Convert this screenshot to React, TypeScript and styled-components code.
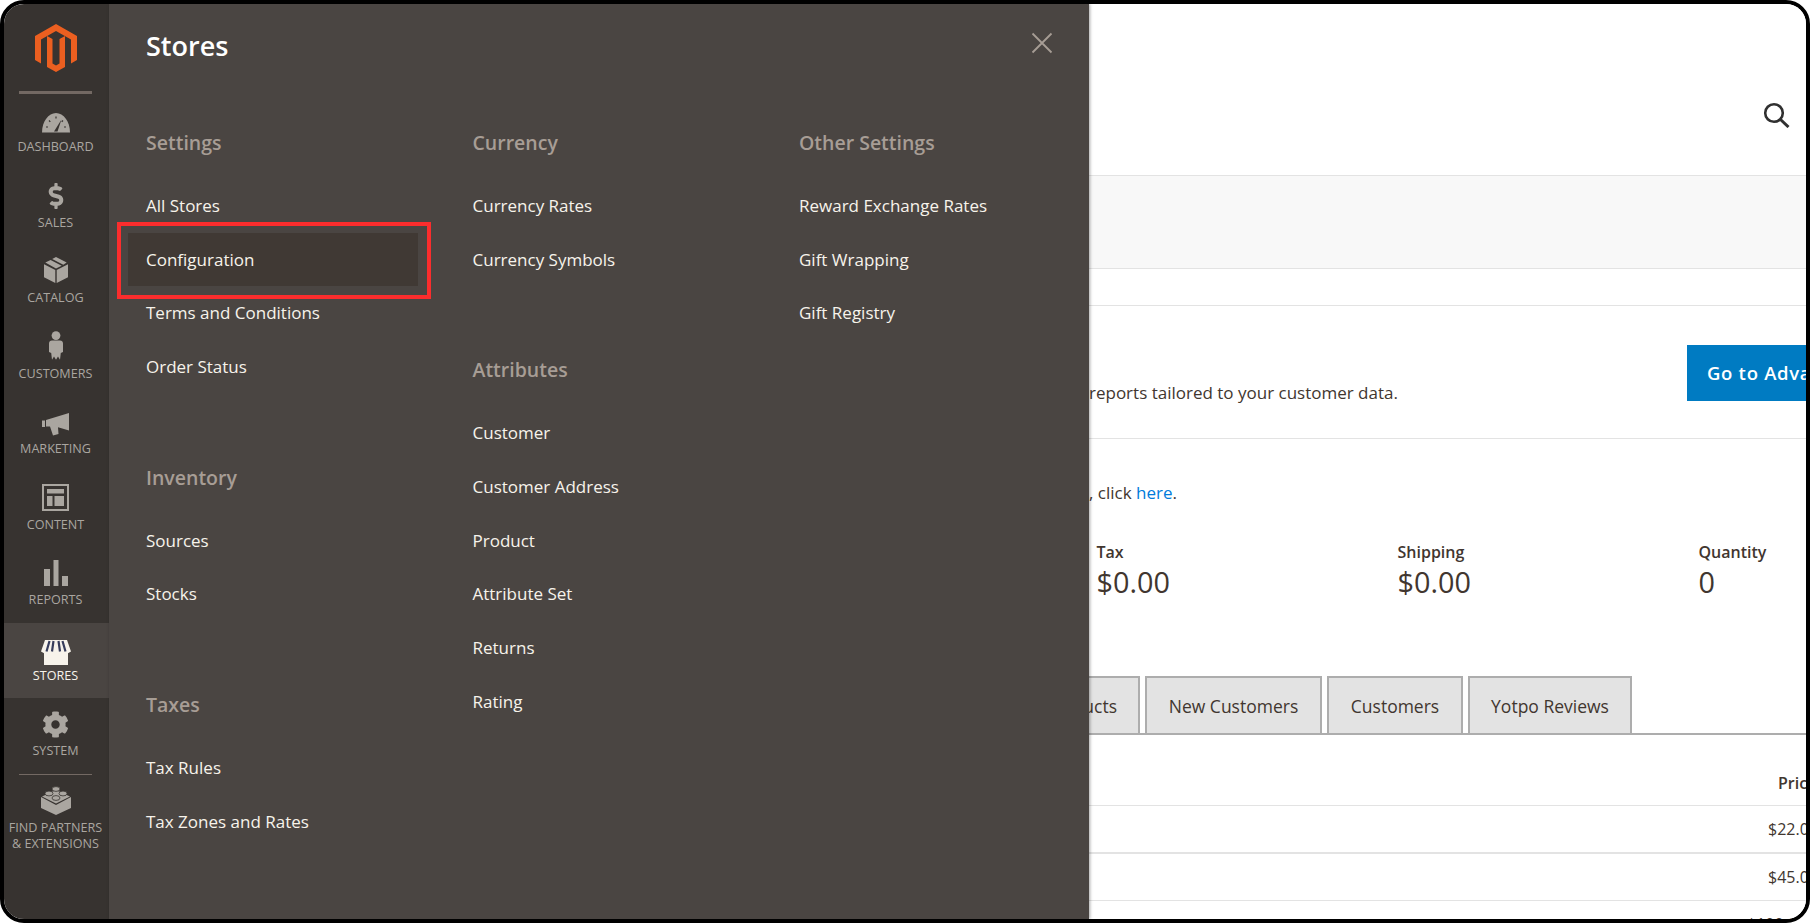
import * as React from 'react';
import styled, { createGlobalStyle } from 'styled-components';
import { FaCog, FaDollarSign } from 'react-icons/fa';

const GlobalStyle = createGlobalStyle`
  html, body {
    margin: 0;
    background: #fff;
  }
  * {
    box-sizing: border-box;
  }
`;

const Frame = styled.div`
  display: flex;
  width: 1810px;
  height: 923px;
  border: 4px solid #000;
  border-radius: 24px;
  overflow: hidden;
  font-family: 'Open Sans', sans-serif;
  color: #41362f;
`;

/* left rail */
const Sidebar = styled.nav`
  flex: 0 0 105px;
  display: flex;
  flex-direction: column;
  align-items: stretch;
  background: #373330;
`;

const LogoBlock = styled.div`
  height: 87px;
  padding: 20px 1px 0 0;
  display: flex;
  justify-content: center;
`;

const RailRule = styled.div<{ $thick?: boolean }>`
  flex: none;
  height: ${({ $thick }) => ($thick ? '3px' : '1px')};
  margin: 0 17px 0 15px;
  background: #736963;
`;

const RailItem = styled.a<{ $active?: boolean }>`
  flex: none;
  height: 75.5px;
  padding: 12px 2px 0 0;
  display: flex;
  flex-direction: column;
  align-items: center;
  background: ${({ $active }) => ($active ? '#4a4542' : 'transparent')};
  color: ${({ $active }) => ($active ? '#f7f3eb' : '#aaa6a0')};
`;

const RailIcon = styled.span<{ $nudge?: number }>`
  height: 28px;
  display: flex;
  align-items: center;
  justify-content: center;
  transform: translateY(${({ $nudge }) => $nudge ?? 0}px);
`;

const RailLabel = styled.span`
  margin-top: 5px;
  font-size: 12.6px;
  line-height: 16px;
  text-align: center;
  text-transform: uppercase;
  white-space: nowrap;
`;

/* Stores flyout */
const Panel = styled.section`
  flex: 0 0 980px;
  min-width: 0;
  position: relative;
  z-index: 2;
  padding: 24px 0 0 37px;
  background: #4a4542;
  box-shadow: 1px 0 3px rgba(0, 0, 0, 0.35);
`;

const PanelTitle = styled.h1`
  margin: 0 0 59px;
  font-size: 27px;
  font-weight: 600;
  line-height: 36px;
  color: #fff;
`;

const CloseButton = styled.button`
  position: absolute;
  top: 27px;
  right: 35px;
  width: 24px;
  height: 24px;
  padding: 0;
  border: 0;
  background: none;
  color: #a79d95;
`;

const Columns = styled.div`
  display: grid;
  grid-template-columns: 326.5px 326.5px 1fr;
`;

const Group = styled.div`
  margin-bottom: 64px;
`;

const GroupTitle = styled.h2`
  margin: 0 0 16px;
  font-size: 19.5px;
  font-weight: 600;
  line-height: 40px;
  color: #a79d95;
`;

const MenuLink = styled.a<{ $active?: boolean }>`
  position: relative;
  display: block;
  width: 290px;
  height: 53.67px;
  margin-left: -18px;
  padding-left: 18px;
  font-size: 17px;
  line-height: 53.67px;
  white-space: nowrap;
  color: #f7f3eb;
  background: ${({ $active }) => ($active ? '#403934' : 'transparent')};
`;

const Callout = styled.span`
  position: absolute;
  top: -11px;
  right: -13px;
  bottom: -13px;
  left: -11px;
  border: 4px solid #fb2d2d;
`;

/* dashboard behind the flyout */
const Main = styled.main`
  flex: 1 1 0;
  min-width: 0;
  overflow: hidden;
  background: #fff;
`;

const TopBar = styled.header`
  height: 171px;
  padding: 98px 16px 0 0;
  display: flex;
  justify-content: flex-end;
  color: #303030;
`;

const NoticeBand = styled.div`
  height: 94px;
  background: #f8f8f8;
  border-top: 1px solid #e3e3e3;
  border-bottom: 1px solid #e3e3e3;
`;

const Spacer = styled.div`
  height: 37px;
  border-bottom: 1px solid #e3e3e3;
`;

const ReportsRow = styled.div`
  height: 133px;
  display: flex;
  border-bottom: 1px solid #e3e3e3;
  white-space: nowrap;
`;

const ReportsText = styled.p`
  flex: 0 0 598px;
  margin: 75px 0 0;
  font-size: 17px;
  line-height: 24px;
`;

const AdvancedButton = styled.a`
  flex: none;
  height: 56px;
  margin-top: 39px;
  padding: 0 20px;
  font-size: 18.5px;
  font-weight: 600;
  letter-spacing: 0.7px;
  line-height: 56px;
  color: #fff;
  background: #007bc2;
`;

const Hint = styled.p`
  margin: 42px 0 0;
  font-size: 17px;
  line-height: 24px;
  white-space: nowrap;
`;

const HintLink = styled.a`
  color: #007bdb;
`;

const Totals = styled.div`
  display: grid;
  grid-template-columns: repeat(2, 301px) 1fr;
  margin: 35px 0 0 7.5px;
`;

const TotalLabel = styled.div`
  font-size: 16px;
  font-weight: 600;
  line-height: 24px;
`;

const TotalValue = styled.div`
  font-size: 28.8px;
  font-weight: 500;
  line-height: 36px;
`;

const Tabs = styled.div`
  display: flex;
  gap: 5px;
  height: 59px;
  margin-top: 76px;
  border-bottom: 2px solid #adadad;
`;

const Tab = styled.div<{ $width: number; $clip?: boolean }>`
  flex: 0 0 ${({ $width }) => $width}px;
  min-width: 0;
  height: 59px;
  display: flex;
  justify-content: ${({ $clip }) => ($clip ? 'flex-end' : 'center')};
  padding-right: ${({ $clip }) => ($clip ? 21 : 0)}px;
  overflow: hidden;
  border: 2px solid #adadad;
  border-left-width: ${({ $clip }) => ($clip ? 0 : 2)}px;
  background: #e3e3e3;
  font-size: 17.5px;
  line-height: 56px;
  white-space: nowrap;
`;

const TableRow = styled.div<{ $height: number; $rule: number; $top?: number }>`
  height: ${({ $height }) => $height}px;
  padding-top: ${({ $top }) => $top ?? 0}px;
  border-bottom: ${({ $rule }) => $rule}px solid #e3e3e3;
  display: flex;
  justify-content: flex-end;
  align-items: center;
  overflow: hidden;
`;

const Cell = styled.span<{ $left: number; $bold?: boolean }>`
  flex: none;
  width: ${({ $left }) => 1806 - $left}px;
  font-size: 16px;
  font-weight: ${({ $bold }) => ($bold ? 600 : 400)};
  white-space: nowrap;
  overflow: hidden;
`;

const MagentoLogo = () => (
  <svg width="42" height="48" viewBox="0 0 42 48">
    <path
      fill="#eb5f20"
      d="M21 0 42 12V36L36 39.5V15.5L21 7 6 15.5V39.5L0 36V12ZM12 12V43L21 48 30 43V12L24.5 15V39.5L21 41.5 17.5 39.5V15Z"
    />
  </svg>
);

const GaugeIcon = () => (
  <svg width="28" height="20" viewBox="0 0 28 20">
    <path fill="currentColor" d="M0 19.5C0 8.5 6.5 0 14 0S28 8.5 28 19.5Z" />
    <path
      stroke="#373330"
      strokeWidth="1.2"
      fill="none"
      d="M4 14h2M7 7.5l1.3 1.3M14 3.5v2M21 7.5l-1.3 1.3M24 14h-2"
    />
    <path fill="#373330" d="M19.5 6.5 15.5 18.5H12Z" />
  </svg>
);

const BoxIcon = () => (
  <svg width="24" height="26" viewBox="0 0 24 26">
    <path fill="currentColor" d="M0 7.2 11.3 13V26L0 20.2ZM24 7.2 12.7 13V26L24 20.2Z" />
    <path fill="currentColor" d="M1.3 5.6 6.6 2.9 17.7 8.7 12 11.6ZM8.2 2.1 12 0 22.7 5.6 19.3 7.8Z" />
  </svg>
);

const PersonIcon = () => (
  <svg width="14" height="29" viewBox="0 0 14 29">
    <circle cx="7" cy="4.6" r="4.4" fill="currentColor" />
    <path
      fill="currentColor"
      d="M3 9.5H11C12.8 9.5 14 10.8 14 12.5V21L11.8 22 11 28.8 9 25.5 7 28.8 5 25.5 3 28.8 2.2 22 0 21V12.5C0 10.8 1.2 9.5 3 9.5Z"
    />
  </svg>
);

const MegaphoneIcon = () => (
  <svg width="27" height="23" viewBox="0 0 27 23">
    <path fill="currentColor" d="M0 7.5H3V14H0ZM4 7 27 0V17.5L16 14.3 16.5 21 11 22.6 8 13.5H4Z" />
  </svg>
);

const LayoutIcon = () => (
  <svg width="27" height="27" viewBox="0 0 27 27">
    <path fill="currentColor" fillRule="evenodd" d="M0 0H27V27H0ZM2 2V25H25V2Z" />
    <path fill="currentColor" d="M5 5H22V9.5H5ZM5 12H10.5V22H5ZM12.5 12H22V22H12.5Z" />
  </svg>
);

const BarsIcon = () => (
  <svg width="24" height="26" viewBox="0 0 24 26">
    <path fill="currentColor" d="M0 9H6V26H0ZM9.5 0H14.5V26H9.5ZM18 16H24V26H18Z" />
  </svg>
);

const StoreIcon = () => (
  <svg width="30" height="25" viewBox="0 0 30 25">
    <path fill="#f7f3eb" d="M3 12H27V25H3Z" />
    <path fill="#f7f3eb" d="M4 0H26L30 11.5 26.5 13.5 3.5 13.5 0 11.5Z" />
    <path
      stroke="#373d5c"
      strokeWidth="2.2"
      fill="none"
      d="M8.5 1 5.5 11.5M12.5 1 11 11.5M17.5 1 19 11.5M21.5 1 24.5 11.5"
    />
  </svg>
);

const BrickIcon = () => (
  <svg width="30" height="29" viewBox="0 0 30 29">
    <path fill="currentColor" d="M0 11 15 19V29L0 22ZM30 11 15 19V29L30 22Z" />
    <path fill="currentColor" d="M15 4 29 10.5 15 17.5 1 10.5Z" />
    <g fill="currentColor" stroke="#373330" strokeWidth="0.8">
      <ellipse cx="15" cy="3" rx="4" ry="2.4" />
      <ellipse cx="8" cy="7.5" rx="4" ry="2.4" />
      <ellipse cx="22" cy="7.5" rx="4" ry="2.4" />
      <ellipse cx="15" cy="12" rx="4" ry="2.4" />
    </g>
  </svg>
);

const railItems = [
  { label: 'Dashboard', icon: <GaugeIcon />, nudge: 3 },
  { label: 'Sales', icon: <FaDollarSign size={26} />, nudge: 0 },
  { label: 'Catalog', icon: <BoxIcon />, nudge: -1 },
  { label: 'Customers', icon: <PersonIcon />, nudge: -1 },
  { label: 'Marketing', icon: <MegaphoneIcon />, nudge: 2 },
  { label: 'Content', icon: <LayoutIcon />, nudge: 0 },
  { label: 'Reports', icon: <BarsIcon />, nudge: 0 },
  { label: 'Stores', icon: <StoreIcon />, nudge: 4, active: true },
  { label: 'System', icon: <FaCog size={27} />, nudge: 0 },
];

const menu = [
  [
    { title: 'Settings', links: ['All Stores', 'Configuration', 'Terms and Conditions', 'Order Status'] },
    { title: 'Inventory', links: ['Sources', 'Stocks'] },
    { title: 'Taxes', links: ['Tax Rules', 'Tax Zones and Rates'] },
  ],
  [
    { title: 'Currency', links: ['Currency Rates', 'Currency Symbols'] },
    {
      title: 'Attributes',
      links: ['Customer', 'Customer Address', 'Product', 'Attribute Set', 'Returns', 'Rating'],
    },
  ],
  [{ title: 'Other Settings', links: ['Reward Exchange Rates', 'Gift Wrapping', 'Gift Registry'] }],
];

const App = () => (
  <Frame>
    <GlobalStyle />
    <Sidebar>
      <LogoBlock>
        <MagentoLogo />
      </LogoBlock>
      <RailRule $thick />
      {railItems.map(({ label, icon, nudge, active }) => (
        <RailItem key={label} $active={active}>
          <RailIcon $nudge={nudge}>{icon}</RailIcon>
          <RailLabel>{label}</RailLabel>
        </RailItem>
      ))}
      <RailRule />
      <RailItem>
        <RailIcon>
          <BrickIcon />
        </RailIcon>
        <RailLabel>
          Find Partners
          <br />& Extensions
        </RailLabel>
      </RailItem>
    </Sidebar>

    <Panel>
      <PanelTitle>Stores</PanelTitle>
      <CloseButton aria-label="Close">
        <svg width="24" height="24" viewBox="0 0 24 24">
          <path stroke="currentColor" strokeWidth="1.8" d="M2.5 2.5 21.5 21.5M21.5 2.5 2.5 21.5" />
        </svg>
      </CloseButton>
      <Columns>
        {menu.map((groups) => (
          <div key={groups[0].title}>
            {groups.map(({ title, links }) => (
              <Group key={title}>
                <GroupTitle>{title}</GroupTitle>
                {links.map((link) => (
                  <MenuLink key={link} $active={link === 'Configuration'}>
                    {link}
                    {link === 'Configuration' && <Callout />}
                  </MenuLink>
                ))}
              </Group>
            ))}
          </div>
        ))}
      </Columns>
    </Panel>

    <Main>
      <TopBar>
        <svg width="27" height="26" viewBox="0 0 27 26">
          <circle cx="11" cy="11" r="8.8" fill="none" stroke="currentColor" strokeWidth="2.6" />
          <path stroke="currentColor" strokeWidth="3" d="M17.5 17.5 25.5 25" />
        </svg>
      </TopBar>
      <NoticeBand />
      <Spacer />
      <ReportsRow>
        <ReportsText>reports tailored to your customer data.</ReportsText>
        <AdvancedButton>Go to Advanced Reporting</AdvancedButton>
      </ReportsRow>
      <Hint>
        , click <HintLink>here</HintLink>.
      </Hint>
      <Totals>
        <div>
          <TotalLabel>Tax</TotalLabel>
          <TotalValue>$0.00</TotalValue>
        </div>
        <div>
          <TotalLabel>Shipping</TotalLabel>
          <TotalValue>$0.00</TotalValue>
        </div>
        <div>
          <TotalLabel>Quantity</TotalLabel>
          <TotalValue>0</TotalValue>
        </div>
      </Totals>
      <Tabs>
        <Tab $width={51} $clip>
          ucts
        </Tab>
        <Tab $width={177}>New Customers</Tab>
        <Tab $width={136}>Customers</Tab>
        <Tab $width={164}>Yotpo Reviews</Tab>
      </Tabs>
      <TableRow $height={71} $rule={1} $top={26}>
        <Cell $left={1778} $bold>
          Price
        </Cell>
      </TableRow>
      <TableRow $height={48} $rule={2}>
        <Cell $left={1768}>$22.00</Cell>
      </TableRow>
      <TableRow $height={47} $rule={1}>
        <Cell $left={1768}>$45.00</Cell>
      </TableRow>
      <TableRow $height={47} $rule={1}>
        <Cell $left={1747}>$100.00</Cell>
      </TableRow>
    </Main>
  </Frame>
);

export default App;
